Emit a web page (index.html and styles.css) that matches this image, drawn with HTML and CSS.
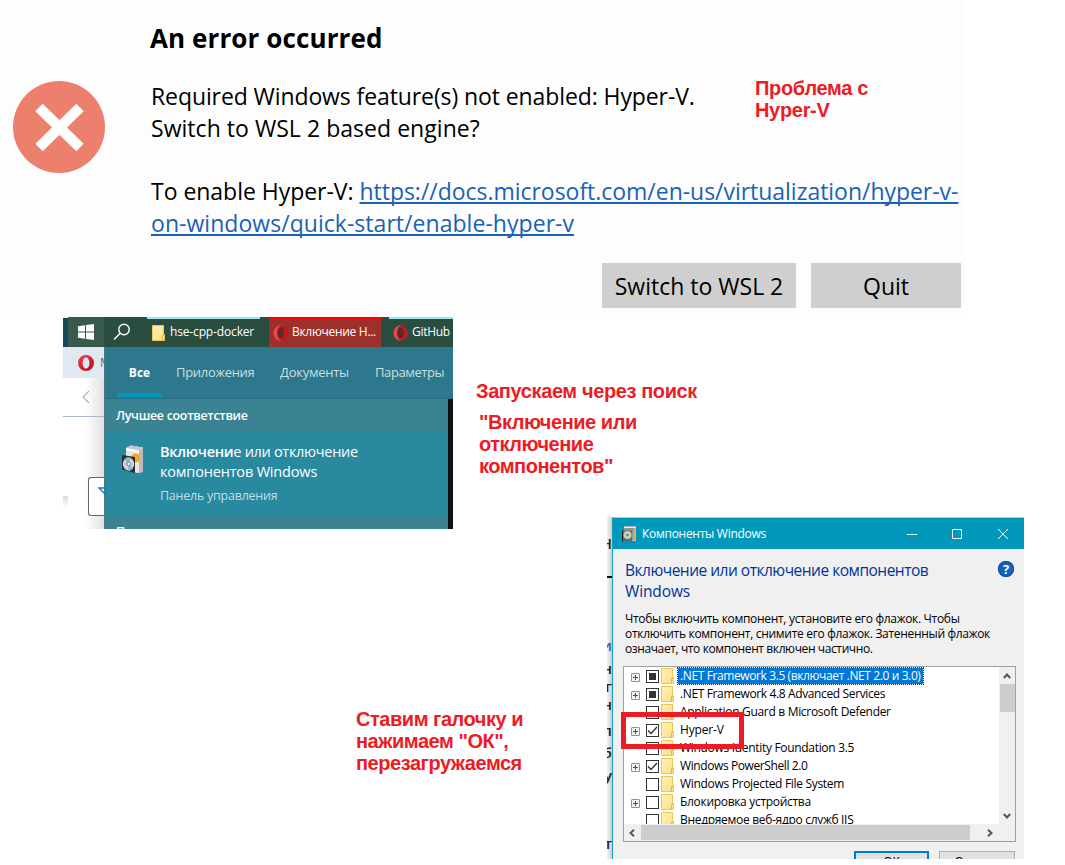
FILE: index.html
```html
<!DOCTYPE html>
<html lang="ru">
<head>
<meta charset="utf-8">
<title>Hyper-V</title>
<link rel="stylesheet" href="styles.css">
</head>
<body>
<svg width="0" height="0" class="defs">
  <defs>
    <linearGradient id="og" x1="0" y1="0" x2="1" y2="1"><stop offset="0" stop-color="#ff3a48"/><stop offset="1" stop-color="#a80c1c"/></linearGradient>
    <linearGradient id="fg" x1="0" y1="0" x2="1" y2="1"><stop offset="0" stop-color="#fff0b8"/><stop offset="1" stop-color="#ffdf80"/></linearGradient>
    <symbol id="folder" viewBox="0 0 13 16"><path d="M.5.5h11v9h1v6H.5z" fill="url(#fg)" stroke="#ecc65a"/><path d="M10.5 15.500v-5h2" fill="none" stroke="#e5b93c"/></symbol>
    <symbol id="opera" viewBox="0 0 16 16"><path fill-rule="evenodd" d="M8 0a8 8 0 1 0 0 16A8 8 0 0 0 8 0zM8 2.500c2.200 0 3.400 2.500 3.400 5.500s-1.200 5.500-3.400 5.500S4.600 11 4.600 8 5.800 2.500 8 2.500z" fill="url(#og)"/></symbol>
    <symbol id="opera2" viewBox="0 0 16 16"><path fill="#c4161f" d="M8 0.500l5 1.500 3 4v5l-3 3.500-5 1.500z"/><path d="M9.500 0A8 8 0 1 0 9.500 16C6 14.500 5 11 5 8s1-6.500 4.500-8z" fill="#f5424c"/><ellipse cx="8.800" cy="7.800" rx="3" ry="5.200" class="hole"/></symbol>
    <symbol id="box" viewBox="0 0 24 29">
      <path d="M5 3l5-2.500 12 2V27l-6 1L5 24z" fill="#e8e6e4"/><path d="M5 3l5-2.500 12 2-3 3z" fill="#c9c5c8"/><path d="M18 6l4-3v23.500l-4 1.500z" fill="#bdb9b8"/><path d="M5 3l13 3v2L5 5z" fill="#fff"/>
      <circle cx="14.500" cy="13" r="4.500" fill="#f5a62c"/><path d="M1 10l13 2v16L1 24.500z" fill="#292f35"/><ellipse cx="7.500" cy="19" rx="5.700" ry="6.500" fill="#cbd5da"/><path d="M7.500 19l-4-5c2-2 4-2 6-1zM7.500 19l4.500 4c-1 2-3 3-5 2.500z" fill="#8eb5cf"/><circle cx="7.500" cy="19" r="1.800" fill="#fff" stroke="#68747c"/>
    </symbol>
    <symbol id="boxmini" viewBox="0 0 16 17"><path d="M3 1h12v15H6z" fill="#b9b3c9"/><path d="M3 2h10v13H3z" fill="#8b9a8c"/><path d="M3 2.500h12" stroke="#efe9f5"/><path d="M12 5h2v9h-2z" fill="#e0a848"/><path d="M1 5.500h10v11H1z" fill="#566f62"/><path d="M1.500 5.500v11" stroke="#222"/><circle cx="6.500" cy="10" r="4" fill="#c3cfc6"/><circle cx="6.500" cy="10" r="1.300" fill="#6f8678"/></symbol>
  </defs>
</svg>
<main class="board">
  <section class="error">
    <svg class="error-icon" viewBox="0 0 92 92"><circle cx="46" cy="46" r="46" fill="#ed7f6d"/><path d="M26 26.500l41 40M67 26.500l-41 40" stroke="#fff" stroke-width="10.500"/></svg>
    <div class="error-body">
      <h1><span>An error occurred</span></h1>
      <p class="e1">Required Windows feature(s) not enabled: Hyper-V.</p>
      <p class="e2">Switch to WSL 2 based engine?</p>
      <p class="e3">To enable Hyper-V: <a>https://docs.microsoft.com/en-us/virtualization/hyper-v-</a></p>
      <p class="e4"><a>on-windows/quick-start/enable-hyper-v</a></p>
      <div class="error-actions"><div class="btn wide">Switch to WSL 2</div><div class="btn">Quit</div></div>
    </div>
  </section>

  <p class="note n1">Проблема с<br>Hyper-V</p>
  <p class="note n2">Запускаем через поиск</p>
  <p class="note n3">"Включение или<br>отключение<br>компонентов"</p>
  <p class="note n4">Ставим галочку и<br>нажимаем "ОК",<br>перезагружаемся</p>

  <section class="search">
    <div class="taskbar">
      <div class="edge"></div>
      <div class="start"><svg width="16" height="16" viewBox="0 0 16 16" fill="#fff"><path d="M0 2.200l7-1v6.300H0zM8 1l8-1v7.500H8zM0 8.500h7v6.300l-7-1zM8 8.500h8V16l-8-1z"/></svg></div>
      <div class="find"><svg width="18" height="18" viewBox="0 0 18 18" fill="none" stroke="#fff" stroke-width="1.400"><circle cx="11" cy="6.500" r="5.200"/><path d="M7.200 10.300L1 16.500"/></svg></div>
      <div class="task t1"><svg width="13" height="16"><use href="#folder"/></svg><span>hse-cpp-docker</span></div>
      <div class="task t2"><svg width="16" height="16"><use href="#opera2"/></svg><span>Включение H...</span></div>
      <div class="task t3"><svg width="16" height="16"><use href="#opera2"/></svg><span>GitHub</span></div>
    </div>
    <div class="search-main">
      <div class="browser">
        <div class="tabs"><svg width="16" height="16"><use href="#opera"/></svg><span>М</span></div>
        <div class="nav"><svg width="8" height="14" viewBox="0 0 8 14" fill="none" stroke="#b4b4b4" stroke-width="1.300"><path d="M7 1L1 7l6 6"/></svg></div>
        <div class="field"><svg width="8" height="9" viewBox="0 0 8 9" fill="none" stroke="#1671bd" stroke-width="1.300"><path d="M8 1H1l7 7"/></svg></div>
        <i class="smudge"></i>
      </div>
      <div class="panel">
        <div class="filters"><span class="active">Все</span><span class="f2">Приложения</span><span class="f3">Документы</span><span class="f4">Параметры</span></div>
        <div class="results">
          <div class="list">
            <div class="group">Лучшее соответствие</div>
            <div class="hit"><svg width="24" height="29"><use href="#box"/></svg><div class="hit-text"><div class="h1"><b>Включени</b>е или отключение</div><div class="h2">компонентов Windows</div><div class="h3">Панель управления</div></div></div>
            <div class="group next">П</div>
          </div>
          <div class="black"></div>
        </div>
      </div>
    </div>
  </section>

  <section class="features">
    <div class="behind"><span class="k1">Н</span><span class="k2"></span><span class="k3">и</span><span class="k4">н</span><span class="k5">г</span><span class="k6">н</span><span class="k7">л</span><span class="k8">б</span><span class="k9">у</span><span class="k10">т</span></div>
    <div class="window">
      <header class="title"><svg width="16" height="17"><use href="#boxmini"/></svg><span>Компоненты Windows</span>
        <svg class="controls" width="104" height="12" viewBox="0 0 104 12" fill="none" stroke="#fff"><path d="M1 6.500h10M46.500 1.500h9v9h-9zM92 1l10 10M102 1L92 11"/></svg></header>
      <div class="content">
        <div class="heading"><div><div class="w1">Включение или отключение компонентов</div><div class="w2">Windows</div></div><div class="help">?</div></div>
        <div class="desc"><div class="d1">Чтобы включить компонент, установите его флажок. Чтобы</div><div class="d2">отключить компонент, снимите его флажок. Затененный флажок</div><div class="d3">означает, что компонент включен частично.</div></div>
        <div class="tree">
          <div class="tree-top">
            <div class="rows">
              <div class="row"><i class="plus"></i><i class="check part"></i><svg width="13" height="16"><use href="#folder"/></svg><span class="label sel r1">.NET Framework 3.5 (включает .NET 2.0 и 3.0)</span></div>
              <div class="row"><i class="plus"></i><i class="check part"></i><svg width="13" height="16"><use href="#folder"/></svg><span class="label r2">.NET Framework 4.8 Advanced Services</span></div>
              <div class="row"><i class="plus none"></i><i class="check"></i><svg width="13" height="16"><use href="#folder"/></svg><span class="label r3">Application Guard в Microsoft Defender</span></div>
              <div class="row"><i class="plus"></i><i class="check"><svg width="11" height="11" viewBox="0 0 11 11"><path d="M1 5.500l3 3L10 2" fill="none" stroke="#333" stroke-width="1.400"/></svg></i><svg width="13" height="16"><use href="#folder"/></svg><span class="label r4">Hyper-V</span></div>
              <div class="row"><i class="plus none"></i><i class="check"></i><svg width="13" height="16"><use href="#folder"/></svg><span class="label r5">Windows Identity Foundation 3.5</span></div>
              <div class="row"><i class="plus"></i><i class="check"><svg width="11" height="11" viewBox="0 0 11 11"><path d="M1 5.500l3 3L10 2" fill="none" stroke="#333" stroke-width="1.400"/></svg></i><svg width="13" height="16"><use href="#folder"/></svg><span class="label r6">Windows PowerShell 2.0</span></div>
              <div class="row"><i class="plus none"></i><i class="check"></i><svg width="13" height="16"><use href="#folder"/></svg><span class="label r7">Windows Projected File System</span></div>
              <div class="row"><i class="plus"></i><i class="check"></i><svg width="13" height="16"><use href="#folder"/></svg><span class="label r8">Блокировка устройства</span></div>
              <div class="row"><i class="plus none"></i><i class="check"></i><svg width="13" height="16"><use href="#folder"/></svg><span class="label r9">Внедряемое веб-ядро служб IIS</span></div>
            </div>
            <div class="vbar"><svg width="8" height="6" viewBox="0 0 8 6"><path d="M.8 5L4 1.500 7.200 5" fill="none" stroke="#555" stroke-width="2"/></svg><div class="vthumb"></div><svg class="down" width="8" height="6" viewBox="0 0 8 6"><path d="M.8 1L4 4.500 7.200 1" fill="none" stroke="#555" stroke-width="2"/></svg></div>
          </div>
          <div class="hbar"><svg width="6" height="8" viewBox="0 0 6 8"><path d="M5 .8L1.500 4 5 7.200" fill="none" stroke="#555" stroke-width="2"/></svg><div class="hthumb"></div><svg width="6" height="8" viewBox="0 0 6 8"><path d="M1 .8L4.500 4 1 7.200" fill="none" stroke="#555" stroke-width="2"/></svg></div>
        </div>
        <div class="buttons"><div class="ok">ОК</div><div class="cancel">Отмена</div></div>
      </div>
    </div>
    <div class="marker"></div>
  </section>
</main>
</body>
</html>
```
FILE: styles.css
```css
* { box-sizing: border-box; }
body { margin: 0; background: #fff; font-family: "Open Sans", "Noto Sans", sans-serif; }
p, h1 { margin: 0; }
.defs { position: absolute; }
.board { position: relative; width: 1065px; height: 865px; overflow: hidden; white-space: nowrap; }

.error { position: absolute; left: 0; top: 0; width: 965px; height: 317px; background: #fdfdfd; display: flex; color: #000; font-size: 23px; line-height: 32px; }
.error-icon { width: 92px; height: 92px; margin: 80.500px 46px 0 13px; flex: none; }
.error-body { flex: 1; padding-top: 22px; }
.error h1 { font-size: 26px; line-height: 32px; height: 58px; font-weight: 700; margin-left: -1px; letter-spacing: 0.1px; }
.error p { height: 32px; }
.error .e2 { height: 63px; letter-spacing: 0.04px; }
.e1 { letter-spacing: -0.1px; }
.e3 { letter-spacing: -0.03px; }
.e4 { letter-spacing: 0.04px; }
.error a { color: #1a62b7; text-decoration: underline; text-decoration-thickness: 1.500px; text-underline-offset: 2px; text-decoration-skip-ink: none; }
.error-actions { display: flex; justify-content: flex-end; gap: 15px; padding: 24px 4px 0 0; }
.btn { width: 150px; height: 45px; background: #cfcfcf; text-align: center; line-height: 46px; }
.btn.wide { width: 194px; }

.note { position: absolute; font: bold 20px/22px "Liberation Sans", Arial, sans-serif; color: #ed1c24; }
.n1 { left: 755px; top: 77px; letter-spacing: -0.32px; }
.n2 { left: 476px; top: 380px; letter-spacing: -0.39px; }
.n3 { left: 479px; top: 411px; letter-spacing: -0.47px; }
.n4 { left: 356px; top: 708px; letter-spacing: -0.46px; }

.search { position: absolute; left: 63px; top: 317px; width: 390px; height: 212px; overflow: hidden; color: #fff; }
.taskbar { display: flex; height: 30px; font-size: 12px; background: #294d3f; }
.edge { width: 5px; background: #124b57; border-top: 1px solid #fff; }
.start { width: 36px; background: #38594b; display: grid; place-items: center; }
.find { width: 43px; padding: 6px 0 0 9px; }
.task { display: flex; align-items: center; border-top: 2px solid #99e9f7; line-height: 26px; }
.task svg { flex: none; }
.task span { margin-top: -2px; }
.t1 { width: 113px; padding-left: 5px; gap: 5px; margin-right: 9px; letter-spacing: -0.15px; }
.t2 { width: 112px; padding-left: 3px; gap: 4px; background: #9e302b; border-color: #f00; margin-right: 8px; letter-spacing: -0.3px; }
.t3 { width: 64px; padding-left: 3px; gap: 4px; letter-spacing: -0.3px; }
.hole { fill: #5c2b28; }
.search-main { display: flex; height: 182px; }
.browser { width: 41px; background: linear-gradient(90deg, #fff 55%, #e0e0e0); position: relative; flex: none; }
.tabs { height: 31px; background: #e0e8f2; display: flex; align-items: center; padding-left: 15px; gap: 6px; font-size: 12px; color: #76625a; overflow: hidden; }
.tabs svg { flex: none; }
.nav { height: 39px; border-bottom: 1px solid #a9b9c9; padding: 12px 0 0 19px; line-height: 0; }
.field { margin: 60px 0 0 25px; height: 39px; border: 1px solid #666; border-right: 0; border-radius: 3px 0 0 3px; background: #fff; padding: 9px 0 0 9px; line-height: 0; }
.smudge { position: absolute; left: 0; top: 149px; width: 5px; height: 12px; background: linear-gradient(#ddd, #fff); }
.panel { flex: 1; background: #2d788c; border-left: 1px solid #477985; }
.filters { height: 52px; display: flex; font-size: 13px; line-height: 51px; color: #c9dee3; border-bottom: 1px solid #266c7d; padding-left: 12px; }
.filters .active { width: 45px; height: 50px; text-align: center; font-weight: 700; color: #fff; border-bottom: 4px solid #0099bc; margin-right: 14px; font-size: 12px; }
.f2 { width: 104px; letter-spacing: -0.3px; }
.f3 { width: 95px; letter-spacing: -0.25px; }
.f4 { letter-spacing: -0.4px; }
.results { display: flex; height: 130px; }
.list { flex: 1; background: #3b8392; }
.black { width: 5px; background: #111; }
.group { height: 32px; padding-left: 11px; font-size: 12.500px; font-weight: 600; line-height: 33px; letter-spacing: -0.32px; }
.next { line-height: 34px; }
.hit { height: 84px; background: #28899f; display: flex; padding: 13px 0 0 16px; gap: 15px; }
.hit > svg { margin-top: 1px; }
.hit-text { font-size: 14.500px; line-height: 20px; margin-top: -2px; }
.hit b { font-weight: 600; }
.h1 { letter-spacing: -0.3px; }
.h2 { letter-spacing: -0.17px; }
.h3 { font-size: 12.500px; line-height: 28px; color: #c1dfe5; letter-spacing: -0.24px; }

.features { position: absolute; left: 607px; top: 517px; width: 417px; height: 342px; display: flex; overflow: hidden; }
.behind { position: relative; width: 5px; flex: none; background: linear-gradient(90deg, #f4f4f4, #ccc); overflow: hidden; font-size: 15px; font-weight: 600; line-height: 16px; color: #222; }
.behind span { position: absolute; right: 0; }
.k1 { top: 18px; }
.behind .k2 { top: 59px; width: 5px; height: 2px; background: #111; }
.behind .k3 { top: 120px; color: #286ac0; }
.k4 { top: 143px; }
.k5 { top: 161px; }
.k6 { top: 179px; }
.k7 { top: 205px; }
.k8 { top: 227px; }
.k9 { top: 250px; }
.k10 { top: 318px; }
.window { flex: 1; border-left: 1px solid #1aa0b8; background: #f0f0f0; border-top: 1px solid #b9c6c8; }
.title { display: flex; align-items: center; height: 31px; background: #0099bc; color: #fff; font-size: 12px; letter-spacing: -0.28px; padding: 0 14px 0 8px; gap: 5px; }
.controls { margin-left: auto; }
.content { padding: 11px 8px 0 10px; }
.heading { display: flex; justify-content: space-between; color: #003399; font-size: 15.500px; line-height: 21px; padding-left: 2px; height: 51px; }
.w1 { letter-spacing: -0.5px; }
.w2 { letter-spacing: -0.12px; }
.help { width: 16px; height: 16px; border-radius: 50%; background: #0c64c8; box-shadow: inset 0 0 0 1px #174c86; color: #fff; font-size: 13px; font-weight: 700; line-height: 16px; text-align: center; margin: 1px 2px 0 0; }
.desc { font-size: 12px; line-height: 15px; color: #000; padding-left: 2px; height: 55px; letter-spacing: -0.31px; }
.d3 { letter-spacing: -0.39px; }
.tree { width: 393px; height: 176px; border: 1px solid #a0a0a0; background: #fff; }
.tree-top { display: flex; height: 157px; }
.rows { flex: 1; overflow: hidden; padding-left: 7px; }
.row { height: 18px; display: flex; align-items: center; font-size: 12px; line-height: 16px; color: #000; }
.row > svg { margin-left: 2px; margin-right: 4px; flex: none; }
.plus { width: 9px; height: 9px; border: 1px solid #919191; border-radius: 1px; margin-right: 6px; margin-top: 3px; background: linear-gradient(#2b4d9b, #2b4d9b) center / 5px 1px no-repeat, linear-gradient(#2b4d9b, #2b4d9b) center / 1px 5px no-repeat, #f4f4f4; flex: none; }
.none { visibility: hidden; }
.check { width: 13px; height: 13px; border: 1px solid #333; background: #fff; flex: none; line-height: 0; }
.part { background: linear-gradient(#333, #333) center / 7px 7px no-repeat, #fff; }
.label { padding: 0 2px; letter-spacing: -0.31px; }
.r1 { letter-spacing: -0.39px; }
.r2 { letter-spacing: -0.37px; }
.r4 { letter-spacing: -0.15px; }
.r6 { letter-spacing: -0.4px; }
.sel { background: #0078d7; color: #fff; outline: 1px dotted #3a2410; height: 16px; }
.vbar { width: 16px; background: #f0f0f0; display: flex; flex-direction: column; align-items: center; padding: 6px 0 5px; }
.vthumb { width: 15px; height: 28px; margin-top: 5px; background: #cdcdcd; }
.down { margin-top: auto; }
.hbar { height: 17px; background: #f0f0f0; display: flex; align-items: center; padding-left: 5px; }
.hthumb { width: 329px; height: 15px; background: #cdcdcd; margin: 0 17px 0 6px; }
.buttons { display: flex; gap: 10px; justify-content: flex-end; padding: 9px 1px 0 0; font-size: 12px; line-height: 18px; }
.ok { width: 75px; height: 23px; border: 2px solid #0078d7; background: #e1e1e1; text-align: center; }
.cancel { width: 76px; height: 23px; border: 1px solid #adadad; background: #e1e1e1; text-align: center; line-height: 20px; }
.marker { position: absolute; left: 14px; top: 195px; width: 123px; height: 37px; border: 5px solid #ed1c24; }
```
